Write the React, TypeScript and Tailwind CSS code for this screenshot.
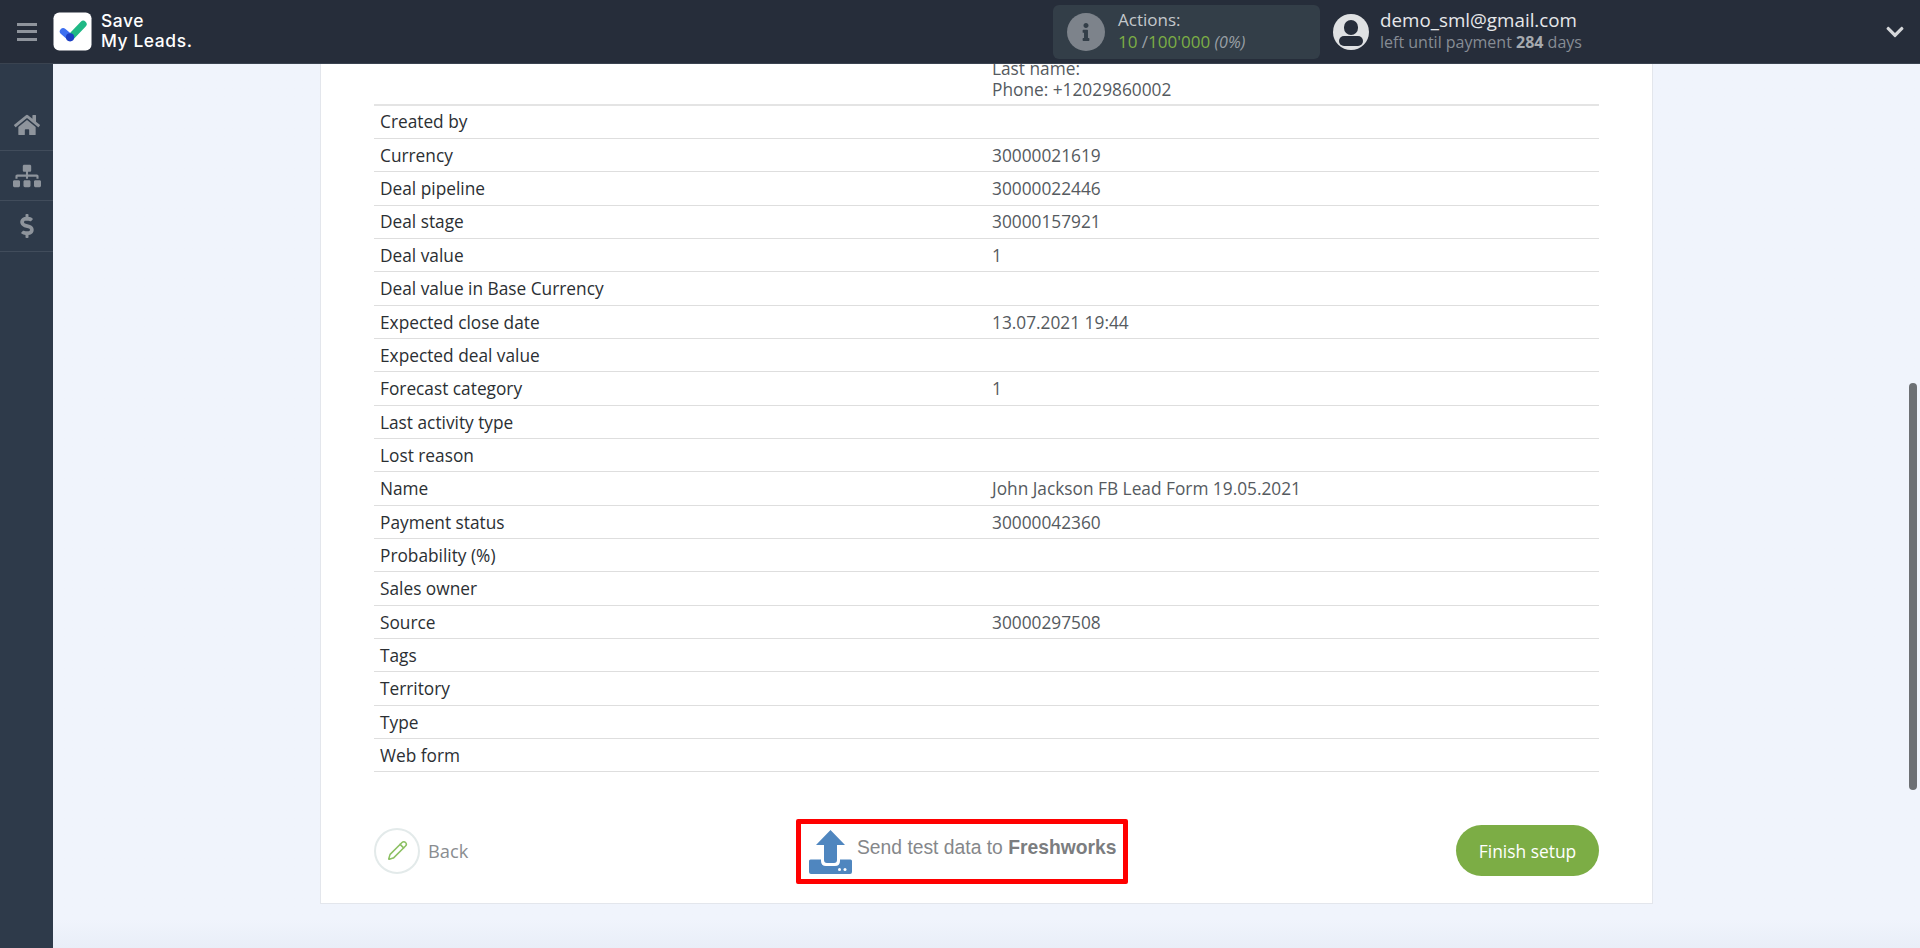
import { FaHome, FaSitemap, FaDollarSign, FaInfo, FaChevronDown } from "react-icons/fa";
import { Pencil } from "lucide-react";

const rows: [string, string][] = [
  ["Created by", ""],
  ["Currency", "30000021619"],
  ["Deal pipeline", "30000022446"],
  ["Deal stage", "30000157921"],
  ["Deal value", "1"],
  ["Deal value in Base Currency", ""],
  ["Expected close date", "13.07.2021 19:44"],
  ["Expected deal value", ""],
  ["Forecast category", "1"],
  ["Last activity type", ""],
  ["Lost reason", ""],
  ["Name", "John Jackson FB Lead Form 19.05.2021"],
  ["Payment status", "30000042360"],
  ["Probability (%)", ""],
  ["Sales owner", ""],
  ["Source", "30000297508"],
  ["Tags", ""],
  ["Territory", ""],
  ["Type", ""],
  ["Web form", ""],
];

function Logo() {
  return (
    <svg viewBox="0 0 40 40" className="w-[39px] h-[39px] shrink-0">
      <rect x="0.5" y="0.5" width="39" height="39" rx="6" fill="#ffffff" />
      <path d="M19 25 L31 12.5" stroke="#1fb885" strokeWidth="7" strokeLinecap="round" fill="none" />
      <path d="M10.5 20 L17.5 26" stroke="#3d6ff0" strokeWidth="7" strokeLinecap="round" fill="none" />
      <circle cx="17.5" cy="26" r="4.2" fill="#1c3ec4" />
    </svg>
  );
}

function UploadIcon() {
  return (
    <svg viewBox="0 0 43 44" className="w-[43px] h-[44px] shrink-0">
      <path d="M21.5 0 L36 15 H28 V30 Q28 33 25 33 H18 Q15 33 15 30 V15 H7 Z" fill="#4f86bf" />
      <path d="M0 31 Q0 29.5 1.5 29.5 H12 V31 Q12 36 17 36 H26 Q31 36 31 31 V29.5 H41.5 Q43 29.5 43 31 V42 Q43 44 41 44 H2 Q0 44 0 42 Z" fill="#4f86bf" />
      <circle cx="30.5" cy="39.5" r="1.5" fill="#ffffff" />
      <circle cx="36" cy="39.5" r="1.5" fill="#ffffff" />
    </svg>
  );
}

export default function App() {
  return (
    <div className="h-[948px] w-[1920px] overflow-hidden flex flex-col relative bg-linear-to-b from-[#f0f4fc] via-[#f0f4fc] via-97% to-[#e9eef8] font-['Open_Sans',sans-serif]">
      <header className="h-[64px] shrink-0 bg-[#262d3a] flex items-center relative z-10 border-b border-[#3a4350]">
        <div className="w-[53px] flex flex-col items-center gap-[4.5px] shrink-0">
          <span className="block w-[20px] h-[3px] bg-[#8f949c]" />
          <span className="block w-[20px] h-[3px] bg-[#8f949c]" />
          <span className="block w-[20px] h-[3px] bg-[#8f949c]" />
        </div>
        <Logo />
        <div className="ml-[9px] -mt-[2px] text-white font-['Inter',sans-serif] font-medium text-[17.4px] leading-[20px] tracking-[0.6px]">
          <div>Save</div>
          <div>My Leads.</div>
        </div>
        <div className="ml-auto w-[267px] h-[54px] rounded-[6px] bg-[#333e48] flex items-center pl-[14px] shrink-0">
          <span className="w-[38px] h-[38px] rounded-full bg-[#7d838b] flex items-center justify-center text-[#333e48]">
            <FaInfo className="w-[18px] h-[18px]" />
          </span>
          <div className="ml-[13px] -mt-[2px]">
            <div className="text-[17px] leading-[22px] text-[#c4c8cc]">Actions:</div>
            <div className="text-[17px] leading-[22px] text-[#7cae45]">
              10 <span className="text-[#9aa0a6]">/</span>100'000 <span className="italic text-[#9aa0a6] text-[16px]">(0%)</span>
            </div>
          </div>
        </div>
        <div className="ml-[13px] w-[36px] h-[36px] rounded-full bg-[#dfe1e3] overflow-hidden relative shrink-0">
          <span className="absolute left-[11px] top-[6px] w-[14px] h-[15px] rounded-full bg-[#262d3a]" />
          <span className="absolute left-[6px] top-[22px] w-[24px] h-[10px] rounded-full bg-[#262d3a]" />
        </div>
        <div className="ml-[11px] w-[505px] shrink-0 -mt-[2px]">
          <div className="text-[18.8px] leading-[23px] text-[#e6e8ea]">demo_sml@gmail.com</div>
          <div className="text-[16px] leading-[20px] text-[#868c94]">
            left until payment <b className="font-bold text-[#a5a9ae]">284</b> days
          </div>
        </div>
        <FaChevronDown className="w-[20px] h-[20px] text-[#d5d7da] mr-[15px] shrink-0" />
      </header>

      <div className="flex flex-1 min-h-0">
        <aside className="w-[53px] shrink-0 bg-[#2e3a4a] pt-[36px] text-[#8e949c]">
          <div className="h-[51px] border-b border-[#414c5b] flex items-center justify-center">
            <FaHome className="w-[26px] h-[26px]" />
          </div>
          <div className="h-[50px] border-b border-[#414c5b] flex items-center justify-center">
            <FaSitemap className="w-[28px] h-[24px]" />
          </div>
          <div className="h-[51px] border-b border-[#414c5b] flex items-center justify-center">
            <FaDollarSign className="w-[24px] h-[24px]" />
          </div>
        </aside>

        <main className="flex-1 min-w-0">
          <div className="w-[1333px] mx-auto h-[840px] bg-white border-x border-b border-[#e3e6ec] px-[53px] flex flex-col">
            <div className="h-[41.5px] shrink-0 border-b-2 border-[#e4e4e4] flex overflow-hidden text-[17.3px] text-[#555a60] leading-[21px]">
              <div className="ml-[618px] -mt-[6px]">
                <div>Last name:</div>
                <div>Phone: +12029860002</div>
              </div>
            </div>
            {rows.map(([label, value]) => (
              <div key={label} className="h-[33.35px] shrink-0 border-b border-[#dedede] flex items-center pt-[1.5px] text-[17.3px]">
                <div className="w-[613px] pl-[6px] shrink-0 text-[#2b2f33]">{label}</div>
                <div className="pl-[5px] text-[#555a60]">{value}</div>
              </div>
            ))}

            <div className="flex items-center justify-between pt-[53px] relative">
              <div className="flex items-center">
                <span className="w-[46px] h-[46px] rounded-full border-2 border-[#e3eaea] flex items-center justify-center text-[#8cc063]">
                  <Pencil className="w-[21px] h-[21px]" strokeWidth={1.75} />
                </span>
                <span className="ml-[8px] text-[18.3px] text-[#8a8d90]">Back</span>
              </div>
              <div className="absolute left-[422px] top-[47px] w-[332px] h-[65px] border-[5px] border-[#ff0000] rounded-[2px] flex items-center pl-[8px] font-['Liberation_Sans',sans-serif] text-[19.3px] text-[#85878a]">
                <UploadIcon />
                <span className="ml-[5px] -mt-[7px] whitespace-nowrap">
                  Send test data to <b className="font-bold text-[#7b7d80]">Freshworks</b>
                </span>
              </div>
              <button className="w-[143px] h-[51px] rounded-full bg-[#7cad45] text-white text-[17.4px]">Finish setup</button>
            </div>
          </div>
        </main>
      </div>

      <div className="absolute right-[3px] top-[383px] w-[8px] h-[407px] rounded-full bg-[#6d7074] z-20" />
    </div>
  );
}
